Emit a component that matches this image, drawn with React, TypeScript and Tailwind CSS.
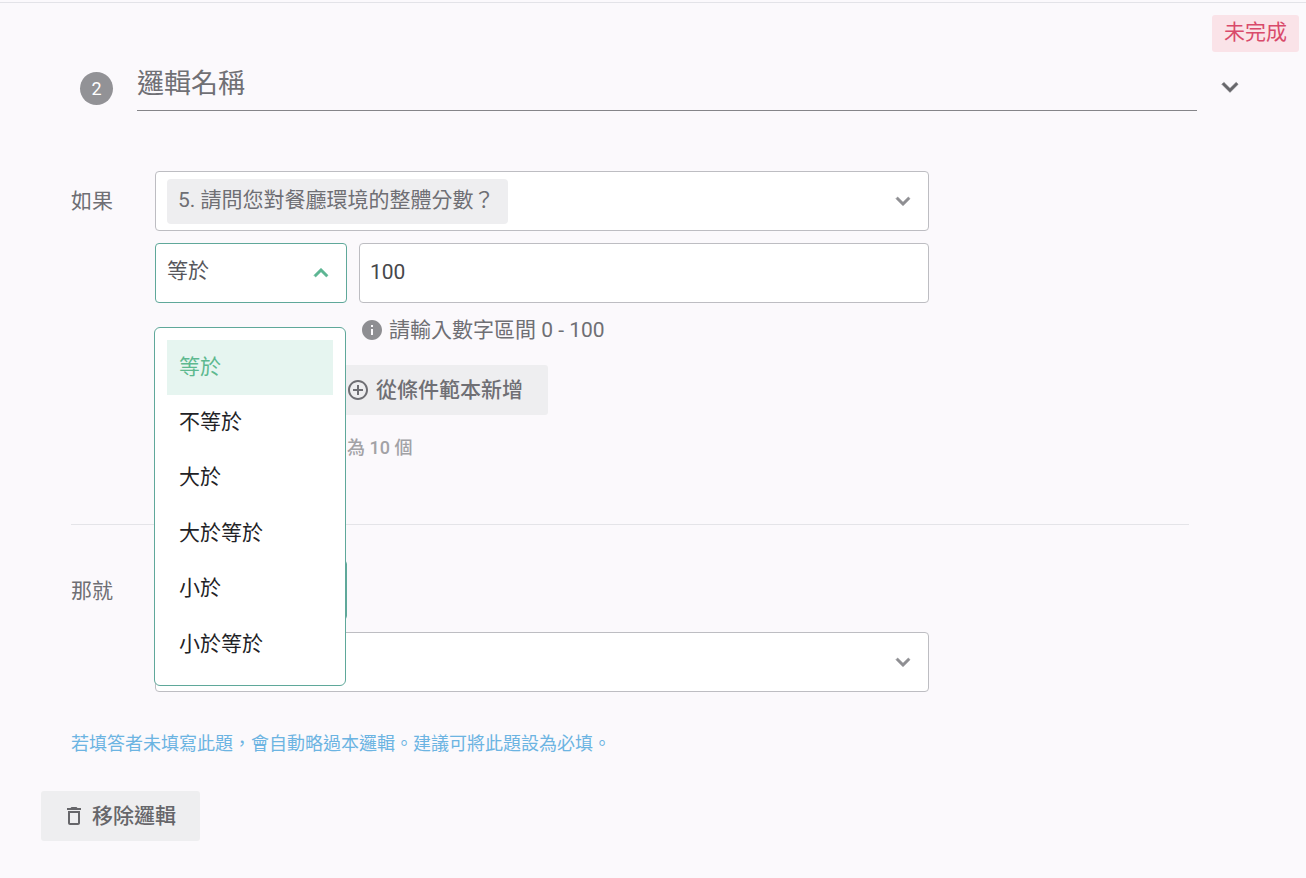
const chevronDown = "M16.59 8.59 12 13.17 7.41 8.59 6 10l6 6 6-6z";
const chevronUp = "M12 8l-6 6 1.41 1.41L12 10.83l4.59 4.58L18 14z";
const infoIcon = "M12 2C6.48 2 2 6.48 2 12s4.48 10 10 10 10-4.48 10-10S17.52 2 12 2zm1 15h-2v-6h2v6zm0-8h-2V7h2v2z";
const addIcon = "M13 7h-2v4H7v2h4v4h2v-4h4v-2h-4V7zm-1-5C6.48 2 2 6.48 2 12s4.48 10 10 10 10-4.48 10-10S17.52 2 12 2zm0 18c-4.41 0-8-3.59-8-8s3.59-8 8-8 8 3.59 8 8-3.59 8-8 8z";
const trashIcon = "M6 19c0 1.1.9 2 2 2h8c1.1 0 2-.9 2-2V7H6v12zM8 9h8v10H8V9zm7.5-5l-1-1h-5l-1 1H5v2h14V4z";

const options = ["不等於", "大於", "大於等於", "小於", "小於等於"];

function Icon({ d, className, bold }: { d: string; className: string; bold?: boolean }) {
  return (
    <svg viewBox="0 0 24 24" fill="currentColor" stroke={bold ? "currentColor" : "none"} strokeWidth={0.6} className={className}>
      <path d={d} />
    </svg>
  );
}

export default function App() {
  return (
    <div className="relative h-[878px] w-[1306px] overflow-hidden bg-[#fbf9fc] pt-[2px] font-['Roboto','Noto_Sans_CJK_TC',sans-serif] text-[21px] leading-[30px] text-[#6f6f74]">
      <div className="h-px bg-[#e3e3e8]" />

      <div className="absolute right-[7px] top-[15px] flex h-[37px] w-[87px] items-center justify-center rounded-[3px] bg-[#fae3e8] pb-[3px] text-[#d94a6b]">
        未完成
      </div>

      <div className="flex pl-[80px] pt-[64px]">
        <div className="mt-[5px] flex h-[33px] w-[33px] items-center justify-center rounded-full bg-[#929296] text-[18px] text-white">
          2
        </div>
        <div className="ml-[24px] h-[44px] w-[1060px] border-b border-[#858589] text-[27px] leading-[34px] text-[#707075]">
          邏輯名稱
        </div>
        <Icon d={chevronDown} bold className="ml-[17px] mt-[4px] h-[32px] w-[32px] text-[#66666a]" />
      </div>

      <div className="flex pl-[71px] pt-[60px]">
        <div className="w-[84px] pt-[15px]">如果</div>
        <div className="flex w-[774px] flex-col gap-3">
          <div className="flex h-[60px] items-center justify-between rounded-[4px] border border-[#bdbdc2] bg-white pl-[11px] pr-[11px]">
            <div className="flex h-[45px] w-[341px] items-center rounded-[4px] bg-[#eeeef0] pb-[3px] pl-[11px] pr-[12px]">
              5. 請問您對餐廳環境的整體分數？
            </div>
            <Icon d={chevronDown} bold className="h-[28px] w-[28px] text-[#8e8e92]" />
          </div>

          <div className="flex gap-3">
            <div className="relative w-[192px]">
              <div className="flex h-[60px] items-center justify-between rounded-[4px] border border-[#5fa89a] bg-white pl-[11px] pr-[11px] text-[#57575c]">
                <span className="pb-[5px]">等於</span>
                <Icon d={chevronUp} bold className="h-[28px] w-[28px] text-[#5bb592]" />
              </div>
              <div className="absolute left-[-1px] top-[84px] z-10 h-[359px] w-[192px] rounded-[6px] border border-[#5fa89a] bg-white px-[12px] py-[12px] text-[#222226]">
                <div className="flex h-[55px] items-center bg-[#e6f5f0] px-[12px] pb-[2px] text-[#5db98f]">等於</div>
                {options.map((o) => (
                  <div key={o} className="flex h-[55.5px] items-center px-[12px] pb-[2px]">
                    {o}
                  </div>
                ))}
              </div>
            </div>
            <div className="flex-1">
              <div className="flex h-[60px] items-center rounded-[4px] border border-[#bdbdc2] bg-white pb-[3px] pl-[10px] pr-[11px] text-[#47474b]">
                100
              </div>
              <div className="mt-[12px] flex h-[30px] items-center">
                <Icon d={infoIcon} className="ml-px h-[24px] w-[24px] text-[#8e8e92]" />
                <span className="ml-[5px]">請輸入數字區間 0 - 100</span>
              </div>
            </div>
          </div>

          <div className="ml-[175px] mt-[8px] flex h-[50px] w-[218px] items-center justify-end rounded-[3px] bg-[#eeeef0] pr-[25px] font-medium">
            <Icon d={addIcon} className="mr-[6px] h-[24px] w-[24px]" />
            從條件範本新增
          </div>
          <div className="ml-[192px] mt-[7px] text-[18px] font-medium leading-[28px] text-[#a2a2a6]">為 10 個</div>
        </div>
      </div>

      <div className="ml-[71px] mt-[62px] h-px w-[1118px] bg-[#e4e4e8]" />

      <div className="flex pl-[71px] pt-[35px]">
        <div className="w-[84px] pt-[16px]">那就</div>
        <div className="flex w-[774px] flex-col gap-3">
          <div className="h-[60px] w-[192px] rounded-[4px] border border-[#5fa89a] bg-white" />
          <div className="flex h-[60px] items-center justify-end rounded-[4px] border border-[#bdbdc2] bg-white pr-[11px]">
            <Icon d={chevronDown} bold className="h-[28px] w-[28px] text-[#8e8e92]" />
          </div>
        </div>
      </div>

      <div className="pl-[71px] pt-[38px] text-[18px] leading-[28px] text-[#6cb4e2]">
        若填答者未填寫此題，會自動略過本邏輯。建議可將此題設為必填。
      </div>

      <div className="ml-[41px] mt-[33px] flex h-[50px] w-[159px] items-center rounded-[3px] bg-[#eeeef0] pl-[21px] font-medium text-[#66666a]">
        <Icon d={trashIcon} className="mr-[6px] h-[24px] w-[24px]" />
        移除邏輯
      </div>
    </div>
  );
}
